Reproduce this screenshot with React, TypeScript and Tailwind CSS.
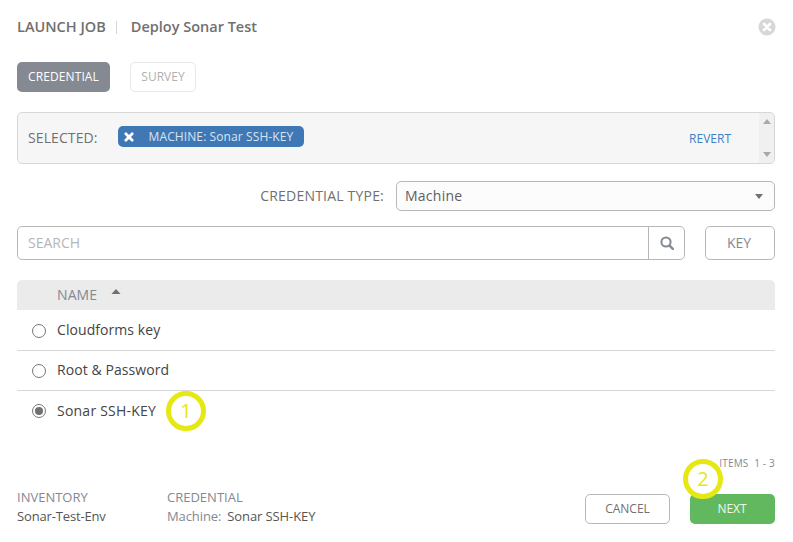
import React from "react";

function Radio({ checked }: { checked?: boolean }) {
  return (
    <span className="flex h-[14px] w-[14px] items-center justify-center rounded-full border border-[#76767a] bg-white">
      {checked && <span className="h-[8px] w-[8px] rounded-full bg-[#707070]" />}
    </span>
  );
}

function Row({ name, checked, last, track }: { name: string; checked?: boolean; last?: boolean; track: string }) {
  return (
    <div className={`flex h-[40px] items-center ${last ? "" : "border-b border-[#d7d7d7]"}`}>
      <div className="flex w-[40px] justify-center pl-[4px]">
        <Radio checked={checked} />
      </div>
      <span className={`mb-[2px] text-[14px] text-[#444] ${track}`}>{name}</span>
    </div>
  );
}

function Annotation({ n, className }: { n: string; className: string }) {
  return (
    <div
      className={`absolute flex h-[40px] w-[40px] items-center justify-center rounded-full border-[5px] border-[#e6e813] text-[20px] text-[#e6e813] ${className}`}
    >
      {n}
    </div>
  );
}

export default function App() {
  return (
    <div className="relative h-[542px] w-[793px] overflow-hidden bg-white pl-[17px] pr-[18px] font-['Open_Sans',sans-serif] text-[#707070]">
      <div className="flex h-[62px] items-start justify-between pt-[17px]">
        <div className="flex items-center text-[14.5px] leading-[20px] font-semibold text-[#707070]">
          <span>LAUNCH JOB</span>
          <span className="mr-[14px] ml-[10px] h-[13px] w-px bg-[#d7d7d7]" />
          <span>Deploy Sonar Test</span>
        </div>
        <svg width="18" height="18" viewBox="0 0 18 18" className="mt-px -mr-px">
          <circle cx="9" cy="9" r="8.5" fill="#d7d7d7" />
          <path d="M6 6l6 6M12 6l-6 6" stroke="#fff" strokeWidth="2.8" strokeLinecap="round" />
        </svg>
      </div>

      <div className="flex h-[30px] gap-[20px] text-[12px]">
        <div className="flex w-[93px] items-center justify-center rounded-[5px] bg-[#848992] tracking-[0.1px] text-white">CREDENTIAL</div>
        <div className="flex w-[66px] items-center justify-center rounded-[5px] border border-[#e8e8e8] text-[#b0b0b0]">SURVEY</div>
      </div>

      <div className="mt-[20px] flex h-[52px] items-stretch rounded-[5px] border border-[#d7d7d7] bg-[#f6f6f6]">
        <div className="flex flex-1 items-center pl-[10px]">
          <span className="mb-[2px] text-[14px] tracking-[0.1px] text-[#707070]">SELECTED:</span>
          <span className="mb-[3px] ml-[20px] flex h-[21px] w-[186px] items-center rounded-[5px] bg-[#4077b5] pl-[5px] text-[12px] tracking-[0.1px] text-[#d9e4f1]">
            <svg width="12" height="12" viewBox="0 0 12 12">
              <path d="M2.8 2.8l6.4 6.4M9.2 2.8l-6.4 6.4" stroke="#fff" strokeWidth="2.8" strokeLinecap="round" />
            </svg>
            <span className="ml-[14px]">MACHINE: Sonar SSH-KEY</span>
          </span>
        </div>
        <div className="flex items-center pt-[2px] pr-[28px] text-[12px] text-[#3f7fc4]">REVERT</div>
        <div className="flex w-[15px] flex-col items-center justify-between rounded-r-[5px] bg-[#f0f0f0] py-[6px]">
          <svg width="8" height="5" viewBox="0 0 8 5"><path d="M4 0l4 5H0z" fill="#a8a8a8" /></svg>
          <svg width="8" height="5" viewBox="0 0 8 5"><path d="M4 5l4-5H0z" fill="#a8a8a8" /></svg>
        </div>
      </div>

      <div className="mt-[17px] flex h-[30px] items-center justify-end">
        <span className="mr-[12px] mb-[2px] text-[14px] tracking-[0.2px] text-[#707070]">CREDENTIAL TYPE:</span>
        <div className="flex h-[30px] w-[379px] items-center justify-between rounded-[5px] border border-[#b7b7b7] bg-[#fcfcfc] pr-[11px] pl-[8px] text-[14px] text-[#5f5f5f]">
          <span className="mb-[2px] tracking-[0.25px]">Machine</span>
          <svg width="8" height="5" viewBox="0 0 8 5"><path d="M0 0h8L4 5z" fill="#707070" /></svg>
        </div>
      </div>

      <div className="mt-[15px] flex h-[34px]">
        <div className="flex w-[668px] rounded-[5px] border border-[#b7b7b7]">
          <div className="flex flex-1 items-center pb-[2px] pl-[10px] text-[14px] text-[#b4b6ba]">SEARCH</div>
          <div className="flex w-[36px] items-center justify-center border-l border-[#b7b7b7]">
            <svg width="14" height="14" viewBox="0 0 14 14" fill="none">
              <circle cx="6" cy="6" r="4.6" stroke="#848992" strokeWidth="2" />
              <path d="M9.6 9.6l3.2 3.2" stroke="#848992" strokeWidth="2.4" strokeLinecap="round" />
            </svg>
          </div>
        </div>
        <div className="ml-[20px] flex w-[70px] items-center justify-center rounded-[5px] border border-[#b7b7b7] pr-[2px] pb-[2px] text-[14px] text-[#848992]">KEY</div>
      </div>

      <div className="mt-[20px] mb-px flex h-[30px] items-center rounded-t-[5px] bg-[#ebebeb] pb-[2px] pl-[40px] text-[14px] tracking-[0.1px] text-[#848992]">
        <span>NAME</span>
        <svg width="10" height="5" viewBox="0 0 10 5" className="mb-[5px] ml-[14px]"><path d="M5 0l4.5 5H.5z" fill="#707070" /></svg>
      </div>
      <Row name="Cloudforms key" track="tracking-[0.07px]" />
      <Row name="Root & Password" track="tracking-[0.07px]" />
      <Row name="Sonar SSH-KEY" checked last track="tracking-[0.23px]" />

      <div className="mt-[25px] flex h-[14px] items-center justify-end text-[10px] tracking-[0.2px] text-[#848992]">ITEMS &nbsp;1 - 3</div>

      <div className="mt-[18px] flex items-start justify-between">
        <div className="flex text-[13px] leading-[19px]">
          <div className="w-[150px]">
            <div className="text-[#848992]">INVENTORY</div>
            <div className="tracking-[-0.15px] text-[#555]">Sonar-Test-Env</div>
          </div>
          <div>
            <div className="text-[#848992]">CREDENTIAL</div>
            <div className="tracking-[-0.1px] text-[#555]"><span className="mr-[6px] text-[#848992]">Machine:</span>Sonar SSH-KEY</div>
          </div>
        </div>
        <div className="mt-[6px] flex gap-[20px] text-[12px]">
          <div className="flex h-[30px] w-[85px] items-center justify-center rounded-[5px] border border-[#b7b7b7] text-[#707070]">CANCEL</div>
          <div className="flex h-[30px] w-[85px] items-center justify-center rounded-[5px] bg-[#62b85e] pr-[1px] text-[#eef8ee]">NEXT</div>
        </div>
      </div>

      <Annotation n="1" className="left-[166px] top-[391px]" />
      <Annotation n="2" className="left-[683px] top-[459px]" />
    </div>
  );
}
